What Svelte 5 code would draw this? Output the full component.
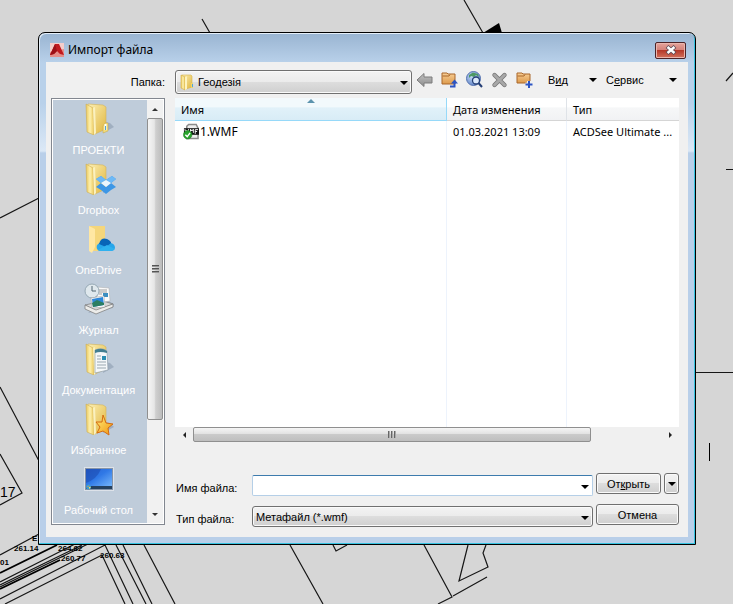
<script lang="ts">
  let folder = 'Геодезія';
  let fileName = '';
  let fileType = 'Метафайл (*.wmf)';

  let places = [
    { name: 'ПРОЕКТИ', icon: 'link' },
    { name: 'Dropbox', icon: 'dropbox' },
    { name: 'OneDrive', icon: 'onedrive' },
    { name: 'Журнал', icon: 'history' },
    { name: 'Документация', icon: 'docs' },
    { name: 'Избранное', icon: 'star' },
    { name: 'Рабочий стол', icon: 'desktop' },
  ];

  let files = [
    { name: '1.WMF', date: '01.03.2021 13:09', type: 'ACDSee Ultimate ...' },
  ];
</script>

<svg width="0" height="0" class="defs" aria-hidden="true">
  <defs>
    <linearGradient id="flap" x1="0" x2="1" y1="0" y2="0">
      <stop offset="0" stop-color="#ecc95c" />
      <stop offset="0.5" stop-color="#fdf0ae" />
      <stop offset="1" stop-color="#ecc95c" />
    </linearGradient>
    <linearGradient id="back" x1="0" x2="1" y1="0" y2="1">
      <stop offset="0" stop-color="#fcefb4" />
      <stop offset="1" stop-color="#e0b63e" />
    </linearGradient>
    <linearGradient id="screen" x1="0" x2="1" y1="0" y2="1">
      <stop offset="0" stop-color="#2a63cf" />
      <stop offset="0.45" stop-color="#2f78e6" />
      <stop offset="1" stop-color="#78b8fb" />
    </linearGradient>
    <linearGradient id="orange" x1="0" x2="0" y1="0" y2="1">
      <stop offset="0" stop-color="#f8cf96" />
      <stop offset="1" stop-color="#dd9a4c" />
    </linearGradient>
    <linearGradient id="gray" x1="0" x2="0" y1="0" y2="1">
      <stop offset="0" stop-color="#c2c2c2" />
      <stop offset="1" stop-color="#8c8c8c" />
    </linearGradient>
    <radialGradient id="globe" cx="0.4" cy="0.35" r="0.7">
      <stop offset="0" stop-color="#c7dcf8" />
      <stop offset="1" stop-color="#5c80c4" />
    </radialGradient>
    <linearGradient id="gold" x1="0" x2="1" y1="0" y2="1">
      <stop offset="0" stop-color="#fff07a" />
      <stop offset="1" stop-color="#f0920e" />
    </linearGradient>
    <symbol id="folder" viewBox="0 0 32 32">
      <path d="M20 30 31 24 27 20 22 19z" fill="#8698ac" opacity="0.55" />
      <path d="M5 1 20 2 23 4V26L12 31 5 27z" fill="url(#back)" stroke="#d4b458" stroke-width="0.6" />
      <path d="M3 1 10 5 11 32 4 29z" fill="url(#flap)" stroke="#cfae52" stroke-width="0.6" />
      <path d="M10 5 12 4 13 30 11 32z" fill="#fbf1bf" />
    </symbol>
  </defs>
</svg>

<main>
  <svg class="drawing" width="733" height="604" viewBox="0 0 733 604" aria-hidden="true">
    <g fill="none" stroke="#161616" stroke-width="1.2">
      <path d="M0 218 39 198M202 19 210 33M464 0 483 33M733 73 726 81M726 169.500H733M695 372.500H733" />
      <path d="M0 387 39 461M0 454 22 493 0 505M0 555 39 534M0 599 105 545 133 604M5 604 102 555 125 604" />
      <path d="M0 582 75 544M0 585 82 545M0 587 90 543M116 545 146 604M123 545 152 604M144 545 175 604" />
      <path d="M290 545 323 604M333 545 336 551 347 545M424 545 452 597 438 604M453 596 487 577" />
      <path d="M468 545 459 581 488 567 483 553 486 545" />
    </g>
    <path d="M0 573 57 545M0 589 60 560" stroke="#000" stroke-width="1.8" />
    <path d="M709.500 443V461" stroke="#000" />
    <path d="M483 33 499 23 502 33z" />
    <text x="0" y="497" font-size="14">17</text>
    <g font-size="8" font-weight="bold">
      <text x="32" y="541">Е</text>
      <text x="14" y="551">261.14</text>
      <text x="58" y="551">264.82</text>
      <text x="61" y="561">260.77</text>
      <text x="100" y="558">260.63</text>
      <text x="0" y="565">01</text>
    </g>
  </svg>

  <div class="window" role="dialog" aria-labelledby="title">
    <header>
      <svg width="14" height="14" viewBox="0 0 14 14" aria-hidden="true">
        <rect width="14" height="14" fill="#e58f8b" />
        <path d="M0 0H14V6L0 9z" fill="#f5cdca" />
        <path d="M5 1H9L14 12 10 11 7 8 4 11 0 12z" fill="#c01a20" />
        <path d="M5 1 7 8 4 11 0 12z" fill="#9c1017" />
      </svg>
      <h1 id="title">Импорт файла</h1>
      <button class="close" aria-label="Закрыть">
        <svg width="12" height="10" viewBox="0 0 12 10">
          <path d="M2 1.500 10 8.500M10 1.500 2 8.500" stroke="#5b4a55" stroke-width="4" />
          <path d="M2.500 2 9.500 8M9.500 2 2.500 8" stroke="#fff" stroke-width="2.400" />
        </svg>
      </button>
    </header>

    <div class="client">
      <label class="folder-label" for="folder">Папка:</label>
      <div class="toolbar">
        <div class="combo folder">
          <svg class="combo-icon" width="15" height="16" viewBox="0 0 15 16" aria-hidden="true">
            <path d="M2 1 11 1 12 2V13L6 15z" fill="url(#back)" stroke="#d9b64a" stroke-width="0.6" />
            <path d="M1 1 5 3V16L1 14z" fill="url(#flap)" stroke="#d2ad45" stroke-width="0.6" />
            <path d="M6 3 7 2V15L5 16V3z" fill="#fdf3c0" />
            <path d="M11 9H13V14H11z" fill="#f1d468" />
            <path d="M12.500 10V13" stroke="#4fa4dc" />
          </svg>
          <select id="folder" bind:value={folder}>
            <option>Геодезія</option>
          </select>
        </div>
        <div class="tools">
          <button aria-label="Назад">
            <svg width="17" height="16" viewBox="0 0 17 16">
              <path d="M1 8 8 1.500V5H16V11H8V14.500z" fill="url(#gray)" stroke="#7d7d7d" />
            </svg>
          </button>
          <button aria-label="На один уровень вверх">
            <svg width="17" height="17" viewBox="0 0 17 17">
              <path d="M1 13V2H6L7 3H14V13z" fill="url(#orange)" stroke="#a9662a" />
              <path d="M1.500 5H8L9 3.500" fill="none" stroke="#a9662a" />
              <path d="M9 15.500H13.500V12" fill="none" stroke="#2c55c4" stroke-width="2" />
              <path d="M10 12.500 13.500 8.500 17 12.500z" fill="#2c55c4" />
            </svg>
          </button>
          <button aria-label="Поиск в Интернете">
            <svg width="17" height="17" viewBox="0 0 17 17">
              <circle cx="7.500" cy="7.500" r="7" fill="url(#globe)" stroke="#5874b0" />
              <path d="M3 4 7 1.500 12 3 13 6 10 4 8 6 5 5 3 7z" fill="#4c9864" />
              <circle cx="10" cy="9.500" r="3.500" fill="#dbe9fb" stroke="#243e75" stroke-width="1.300" />
              <path d="M12.500 12 16 16" stroke="#243e75" stroke-width="2" />
            </svg>
          </button>
          <button aria-label="Удалить">
            <svg width="17" height="16" viewBox="0 0 17 16">
              <path d="M3.500 3 13.500 13M13.500 3 3.500 13" stroke="#777" stroke-width="4.400" stroke-linecap="round" />
              <path d="M3.500 3 13.500 13M13.500 3 3.500 13" stroke="#a8a8a8" stroke-width="2.800" stroke-linecap="round" />
            </svg>
          </button>
          <button aria-label="Создать папку">
            <svg width="17" height="17" viewBox="0 0 17 17">
              <path d="M1 12V2H6L7 3H14V12z" fill="url(#orange)" stroke="#a9662a" />
              <path d="M1.500 5H8L9 3.500" fill="none" stroke="#a9662a" />
              <path d="M13 10V17M9.500 13.500H16.500" stroke="#f0f0f0" stroke-width="4" />
              <path d="M13 10V17M9.500 13.500H16.500" stroke="#2c55c4" stroke-width="2" />
            </svg>
          </button>
        </div>
        <button class="menu view">В<u>и</u>д <i class="arrow"></i></button>
        <button class="menu service">С<u>е</u>рвис <i class="arrow"></i></button>
      </div>

      <nav class="places">
        <ul>
          {#each places as place}
            <li>
              <button>
                <svg width="32" height="32" viewBox="0 0 32 32" aria-hidden="true">
                  {#if place.icon == 'history'}
                    <path d="M5 30 30 25 31 21 22 16z" fill="#8698ac" opacity="0.500" />
                    <path d="M2 22 20 18 30 21 13 28z" fill="#d8d9d9" stroke="#777" stroke-width="0.700" />
                    <path d="M2 22 13 27 30 21V24L13 31 2 26z" fill="#ececea" stroke="#777" stroke-width="0.700" />
                    <path d="M14 4 26 5 27 18 14 20z" fill="#fafafa" stroke="#aaa" stroke-width="0.500" />
                    <path d="M16 7H24M16 9H24M16 11H19" stroke="#777" stroke-width="0.700" />
                    <path d="M20 10H25V14H20z" fill="#3c8fc2" />
                    <circle cx="9" cy="8" r="7" fill="#dfe8ed" stroke="#96a9b5" />
                    <path d="M9 3V8L13 8" fill="none" stroke="#526773" />
                    <path d="M8 15 21 13 22 24 9 25z" fill="#fff" stroke="#999" stroke-width="0.500" />
                    <path d="M9 16 20 14 21 22 10 24z" fill="#2d87d8" />
                    <path d="M9 20 14 17 21 20V22L10 24z" fill="#2b7e62" />
                  {:else if place.icon == 'desktop'}
                    <rect x="1.500" y="4.500" width="29" height="23" fill="#8594a8" stroke="#dde2e9" />
                    <rect x="3" y="6" width="26" height="18" fill="url(#screen)" />
                    <path d="M3 6H18Q14 16 3 20z" fill="#1740a5" opacity="0.450" />
                    <rect x="3" y="23" width="26" height="3" fill="#25415f" />
                    <circle cx="5.500" cy="24" r="2.500" fill="#3e9ad0" />
                    <path d="M4 24 5.500 22.500V24z" fill="#f59a33" /><path d="M6 24H8L6 26z" fill="#ffe04c" />
                  {:else if place.icon == 'onedrive'}
                    <path d="M6 3H22V28H9z" fill="#f5d67b" />
                    <path d="M6 3 12 6V24L9 30 6 28z" fill="#ffe7a3" />
                    <path d="M17 28A4 4 0 0 1 15 21Q18 20 19 18 24 14 28 20 32 21 32 25 31 28 28 28z" fill="#27a5ea" />
                    <path d="M16 21Q18 14 24 16 28 18 28 20L23 24z" fill="#0864b8" />
                    <path d="M15 27 24 22 32 26Q30 28 28 28H17z" fill="#2fb1ef" />
                  {:else}
                    <use href="#folder" width="32" height="32" />
                    {#if place.icon == 'link'}
                      <path d="M22 20H25V28L20 30V23z" fill="#f4dd7b" stroke="#c4a64d" stroke-width="0.500" />
                      <path d="M22.500 21V27" stroke="#fff" stroke-width="2" />
                      <path d="M22.500 23V27" stroke="#4fa4dc" />
                    {:else if place.icon == 'dropbox'}
                      <path d="M13 16 18 13 23 17 18 20zM23 17 29 13 33 16 28 20zM13 24 18 20 23 24 18 27zM23 24 28 20 33 24 28 27zM18 27 23 24 28 27 23 31z" fill="#3d97e6" />
                      <path d="M13 16 18 13 23 17 18 20zM23 17 29 13 33 16 28 20z" fill="#6db9f6" />
                      <path d="M18 20 23 17 28 20 23 24z" fill="#eaf6ff" />
                    {:else if place.icon == 'docs'}
                      <path d="M12 7Q19 4 24 8L25 27 12 30z" fill="#f5f8fa" stroke="#94a2ad" stroke-width="0.700" />
                      <path d="M12 7Q19 4 24 8V10Q17 8 12 10z" fill="#437e91" />
                      <path d="M14 13H18M14 16H18M14 19H23M14 22H23M14 25H23" stroke="#9aa7b0" />
                      <path d="M19 13H23V17H19z" fill="#2b8db2" />
                    {:else if place.icon == 'star'}
                      <path d="M20 12 23 20 30 21 25 25 26 32 20 28 14 30 17 24 13 19 19 19z" fill="url(#gold)" stroke="#d56b10" />
                    {/if}
                  {/if}
                </svg>
                <span>{place.name}</span>
              </button>
            </li>
          {/each}
        </ul>
        <div class="vscroll">
          <button aria-label="Вверх"><i class="tri up"></i></button>
          <div class="thumb"><i class="grip"></i></div>
          <button aria-label="Вниз"><i class="tri down"></i></button>
        </div>
      </nav>

      <div class="content">
        <div class="list">
          <table>
            <colgroup><col class="c-name" /><col class="c-date" /><col /></colgroup>
            <thead>
              <tr><th class="sorted">Имя<i class="sort"></i></th><th>Дата изменения</th><th>Тип</th></tr>
            </thead>
            <tbody>
              {#each files as file}
                <tr>
                  <td>
                    <span class="file">
                      <svg width="16" height="17" viewBox="0 0 17 17" aria-hidden="true">
                        <path d="M4 16V3L6 1H14L16 5V16z" fill="#eee" stroke="#8b8b8b" stroke-width="1.600" />
                        <rect x="1" y="5" width="16" height="7" fill="#101010" />
                        <path d="M2 6 3 10 4 7 5 10 6 6M8 10V6L9.500 8 11 6V10M13 11V6.500H16M13 8.500H15" fill="none" stroke="#fff" />
                        <circle cx="5" cy="12" r="4.500" fill="#28a32c" stroke="#157a1c" stroke-width="0.600" />
                        <path d="M2.500 12 4.500 14 7.500 10" fill="none" stroke="#fff" stroke-width="1.500" />
                      </svg>
                      {file.name}
                    </span>
                  </td>
                  <td>{file.date}</td>
                  <td>{file.type}</td>
                </tr>
              {/each}
              <tr class="filler"><td></td><td></td><td></td></tr>
            </tbody>
          </table>
        </div>
        <div class="hscroll">
          <button aria-label="Влево"><i class="tri left"></i></button>
          <div class="track"><div class="thumb"><i class="grip"></i></div></div>
          <button aria-label="Вправо"><i class="tri right"></i></button>
        </div>

        <form on:submit|preventDefault>
          <label for="filename">Имя файла:</label>
          <div class="combo edit">
            <input id="filename" type="text" bind:value={fileName} />
          </div>
          <div class="buttons">
            <button class="btn open" type="submit">От<u>к</u>рыть</button>
            <button class="btn more" type="button" aria-label="Параметры открытия"><i class="arrow"></i></button>
          </div>
          <label for="filetype">Тип файла:</label>
          <div class="combo">
            <select id="filetype" bind:value={fileType}>
              <option>Метафайл (*.wmf)</option>
            </select>
          </div>
          <div class="buttons">
            <button class="btn cancel" type="button">Отмена</button>
          </div>
        </form>
      </div>
    </div>
  </div>
</main>

<style>
  :global(body) {
    margin: 0;
    background: #d6d6d6;
  }

  main {
    position: relative;
    min-height: 100vh;
    box-sizing: border-box;
    padding: 32px 37px 59px 38px;
    overflow: hidden;
    font: 11px/16px "Liberation Sans", Arial, sans-serif;
    color: #000;
  }

  .defs,
  .drawing {
    position: absolute;
    top: 0;
    left: 0;
  }

  button,
  input,
  select {
    box-sizing: border-box;
    margin: 0;
    padding: 0;
    border: 0;
    background: none;
    font: inherit;
    color: inherit;
  }

  svg {
    display: block;
    flex: none;
    overflow: visible;
  }

  .window {
    position: relative;
    box-sizing: border-box;
    border: 1px solid #000;
    border-radius: 7px 7px 0 0;
    padding: 0 7px 7px;
    background: linear-gradient(#99b4d1, #b9d1ea 30px, #b9d1ea 70px, #dbe8f6 118px, #b9cfe9 120px, #b9cfe9);
    box-shadow: inset -1px -1px #35c3e0, inset 1px 1px #e4eef8;
  }

  header {
    display: flex;
    align-items: center;
    height: 29px;
    padding: 5px 2px 0 4px;
    box-sizing: border-box;
    gap: 4px;
  }

  h1 {
    flex: 1;
    margin: 0;
    font: 12px/16px "Noto Sans", "Segoe UI", sans-serif;
  }

  .close {
    display: flex;
    align-items: center;
    justify-content: center;
    width: 31px;
    height: 17px;
    border: 1px solid #4d2327;
    border-radius: 2px;
    background: linear-gradient(#e5a49c, #d5827a 45%, #b5392a 50%, #d2705c);
    box-shadow: inset 0 0 0 1px #eab5ad;
  }

  .client {
    display: grid;
    grid-template-columns: 114px 1fr;
    column-gap: 10px;
    padding: 7px 9px 10px 5px;
    background: #f0f0f0;
  }

  .folder-label {
    padding-top: 5px;
    text-align: right;
  }

  .toolbar {
    display: flex;
    align-items: center;
    height: 29px;
    padding-bottom: 4px;
    box-sizing: border-box;
  }

  .combo {
    position: relative;
    height: 21px;
  }

  .combo::after,
  .arrow {
    content: "";
    border: 4px solid transparent;
    border-top-color: #000;
    border-bottom: 0;
  }

  .combo::after {
    position: absolute;
    right: 4px;
    top: 50%;
    margin-top: -1px;
    pointer-events: none;
  }

  .combo select,
  .btn {
    border: 1px solid #707070;
    border-radius: 3px;
    background: linear-gradient(#f3f3f3, #ebebeb 50%, #dddddd 50%, #cfcfcf);
    box-shadow: inset 0 0 0 1px #fafafa;
  }

  .combo select {
    appearance: none;
    width: 100%;
    height: 100%;
    padding: 0 16px 0 3px;
  }

  .folder {
    width: 237px;
    height: 24px;
  }

  .folder select {
    padding-left: 22px;
  }

  .combo-icon {
    position: absolute;
    left: 5px;
    top: 4px;
    pointer-events: none;
  }

  .edit input {
    width: 100%;
    height: 100%;
    padding: 0 16px 0 3px;
    border: 1px solid #b5cfe7;
    border-top-color: #3d7bad;
    border-radius: 2px;
    background: #fff;
  }

  .tools {
    display: flex;
    gap: 8px;
    margin-left: 4px;
    padding-bottom: 4px;
  }

  .tools button {
    display: flex;
    align-items: center;
    height: 18px;
  }

  .menu {
    display: flex;
    align-items: center;
    line-height: 16px;
    text-align: left;
    padding-bottom: 4px;
  }

  .menu .arrow {
    margin-left: auto;
  }

  .view {
    width: 49px;
    margin-left: 15px;
  }

  .service {
    width: 71px;
    margin-left: 9px;
  }

  .places {
    display: flex;
    box-sizing: border-box;
    margin-bottom: 2px;
    border: 1px solid #828790;
    padding: 1px;
    background: #fff;
  }

  .places ul {
    flex: 1;
    margin: 0;
    padding: 3px 3px 0 0;
    list-style: none;
    background: #bfccda;
  }

  .places li button {
    display: flex;
    flex-direction: column;
    align-items: center;
    width: 100%;
    height: 60px;
    gap: 7px;
    color: #fff;
    white-space: nowrap;
  }

  .vscroll {
    display: flex;
    flex-direction: column;
    width: 16px;
    background: #f1f1f1;
  }

  .vscroll button {
    height: 18px;
    display: flex;
    align-items: center;
    justify-content: center;
  }

  .vscroll .thumb {
    height: 302px;
    margin-bottom: auto;
    background: linear-gradient(90deg, #f5f5f5, #e6e6e6 45%, #cfcfcf 55%, #bcbcbc);
  }

  .thumb {
    display: flex;
    align-items: center;
    justify-content: center;
    box-sizing: border-box;
    border: 1px solid #8f8f8f;
    border-radius: 2px;
  }

  .vscroll .grip {
    width: 7px;
    height: 8px;
    background: repeating-linear-gradient(#555 0 1px, #999 1px 2px, transparent 2px 3px);
  }

  .tri {
    border: 3px solid transparent;
  }

  .up {
    border-bottom-color: #333;
    border-top: 0;
  }

  .down {
    border-top-color: #333;
    border-bottom: 0;
  }

  .left {
    border-right-color: #222;
    border-left: 0;
  }

  .right {
    border-left-color: #222;
    border-right: 0;
  }

  .content {
    display: flex;
    flex-direction: column;
    min-width: 0;
    min-height: 429px;
  }

  .list {
    display: flex;
    flex: 1;
    background: #fff;
    font: 11px/16px "Noto Sans", "Segoe UI", sans-serif;
    overflow: hidden;
  }

  table {
    width: 100%;
    table-layout: fixed;
    border-spacing: 0;
  }

  .c-name {
    width: 272px;
  }

  .c-date {
    width: 120px;
  }

  th {
    position: relative;
    height: 20px;
    padding: 2px 0 0 6px;
    border-bottom: 1px solid #d5d5d5;
    border-right: 1px solid #dfe3e8;
    background: linear-gradient(#fff 40%, #f6f7f8 45%, #f1f2f4);
    font-weight: normal;
    text-align: left;
  }

  .sorted {
    border-color: #96d9f9;
    background: linear-gradient(#f2f9fc 40%, #e1f1f9 45%, #d8ecf6);
  }

  .sort {
    position: absolute;
    top: 1px;
    left: 50%;
    margin-left: -4px;
    border: 4px solid transparent;
    border-top: 0;
    border-bottom-color: #5c93ad;
  }

  td {
    height: 21px;
    padding: 0 0 0 6px;
    border-right: 1px solid #edf3fc;
    white-space: nowrap;
  }

  th:last-child,
  td:last-child {
    border-right: 0;
  }

  .filler td {
    height: auto;
  }

  .file {
    display: flex;
    align-items: center;
    gap: 1px;
    padding-left: 2px;
    font-size: 12px;
  }

  .hscroll {
    display: flex;
    height: 15px;
  }

  .hscroll button {
    display: flex;
    align-items: center;
    justify-content: center;
    width: 18px;
  }

  .track {
    flex: 1;
    display: flex;
  }

  .track .thumb {
    width: 85%;
    background: linear-gradient(#f5f5f5, #e2e2e2 45%, #cacaca 50%, #bebebe);
  }

  .hscroll .grip {
    width: 8px;
    height: 7px;
    background: repeating-linear-gradient(90deg, #666 0 1px, #aaa 1px 2px, transparent 2px 3px);
  }

  form {
    display: grid;
    grid-template-columns: 73px 1fr 83px;
    column-gap: 3px;
    row-gap: 8px;
    padding: 31px 0 0 1px;
  }

  form label {
    padding-top: 7px;
    line-height: 16px;
  }

  form .combo {
    margin-top: 2px;
  }

  .buttons {
    display: flex;
    gap: 3px;
    align-items: flex-start;
    height: 21px;
  }

  .btn {
    height: 21px;
  }

  .open,
  .cancel {
    flex: 1;
  }

  .more {
    width: 15px;
    display: flex;
    align-items: center;
    justify-content: center;
  }

  .drawing text {
    font-family: "Liberation Sans", Arial, sans-serif;
  }
</style>
